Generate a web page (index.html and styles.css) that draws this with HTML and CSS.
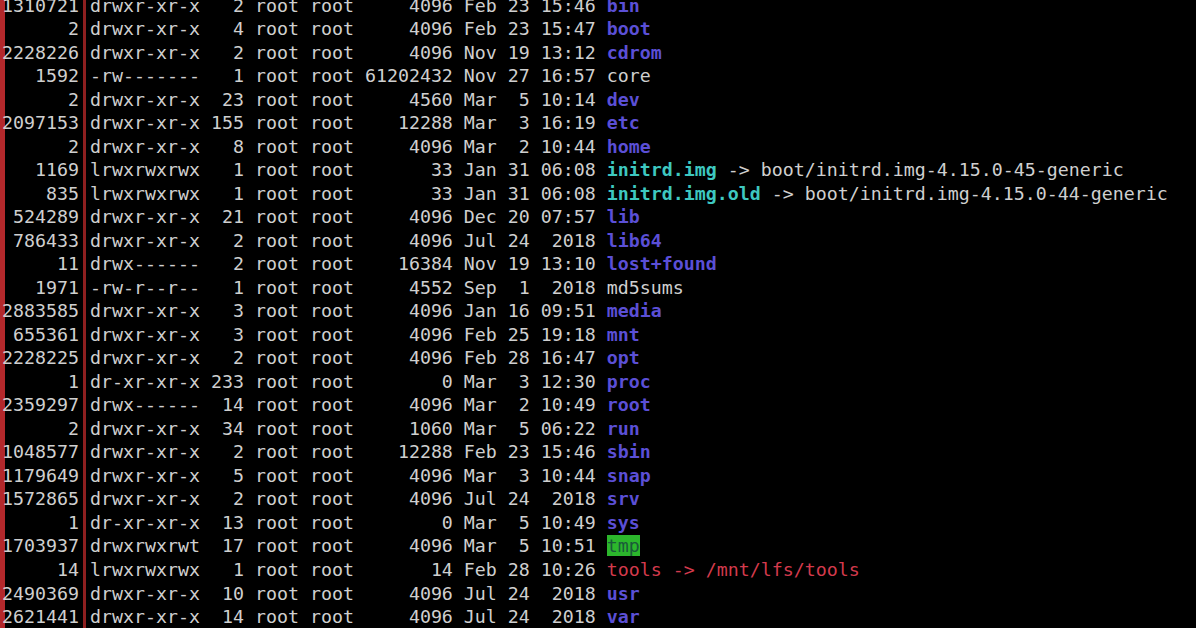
FILE: index.html
```html
<!DOCTYPE html>
<html>
<head>
<meta charset="utf-8">
<link rel="stylesheet" href="styles.css">
</head>
<body>
<main class="term">
<pre class="listing">1310721 drwxr-xr-x   2 root root     4096 Feb 23 15:46 <span class="dir">bin</span>
      2 drwxr-xr-x   4 root root     4096 Feb 23 15:47 <span class="dir">boot</span>
2228226 drwxr-xr-x   2 root root     4096 Nov 19 13:12 <span class="dir">cdrom</span>
   1592 -rw-------   1 root root 61202432 Nov 27 16:57 core
      2 drwxr-xr-x  23 root root     4560 Mar  5 10:14 <span class="dir">dev</span>
2097153 drwxr-xr-x 155 root root    12288 Mar  3 16:19 <span class="dir">etc</span>
      2 drwxr-xr-x   8 root root     4096 Mar  2 10:44 <span class="dir">home</span>
   1169 lrwxrwxrwx   1 root root       33 Jan 31 06:08 <span class="link">initrd.img</span> -&gt; boot/initrd.img-4.15.0-45-generic
    835 lrwxrwxrwx   1 root root       33 Jan 31 06:08 <span class="link">initrd.img.old</span> -&gt; boot/initrd.img-4.15.0-44-generic
 524289 drwxr-xr-x  21 root root     4096 Dec 20 07:57 <span class="dir">lib</span>
 786433 drwxr-xr-x   2 root root     4096 Jul 24  2018 <span class="dir">lib64</span>
     11 drwx------   2 root root    16384 Nov 19 13:10 <span class="dir">lost+found</span>
   1971 -rw-r--r--   1 root root     4552 Sep  1  2018 md5sums
2883585 drwxr-xr-x   3 root root     4096 Jan 16 09:51 <span class="dir">media</span>
 655361 drwxr-xr-x   3 root root     4096 Feb 25 19:18 <span class="dir">mnt</span>
2228225 drwxr-xr-x   2 root root     4096 Feb 28 16:47 <span class="dir">opt</span>
      1 dr-xr-xr-x 233 root root        0 Mar  3 12:30 <span class="dir">proc</span>
2359297 drwx------  14 root root     4096 Mar  2 10:49 <span class="dir">root</span>
      2 drwxr-xr-x  34 root root     1060 Mar  5 06:22 <span class="dir">run</span>
1048577 drwxr-xr-x   2 root root    12288 Feb 23 15:46 <span class="dir">sbin</span>
1179649 drwxr-xr-x   5 root root     4096 Mar  3 10:44 <span class="dir">snap</span>
1572865 drwxr-xr-x   2 root root     4096 Jul 24  2018 <span class="dir">srv</span>
      1 dr-xr-xr-x  13 root root        0 Mar  5 10:49 <span class="dir">sys</span>
1703937 drwxrwxrwt  17 root root     4096 Mar  5 10:51 <span class="sticky">tmp</span>
     14 lrwxrwxrwx   1 root root       14 Feb 28 10:26 <span class="broken">tools -&gt; /mnt/lfs/tools</span>
2490369 drwxr-xr-x  10 root root     4096 Jul 24  2018 <span class="dir">usr</span>
2621441 drwxr-xr-x  14 root root     4096 Jul 24  2018 <span class="dir">var</span></pre>
</main>
</body>
</html>
```

FILE: styles.css
```css
html, body {
  margin: 0;
  padding: 0;
  background: #000;
  height: 100%;
  overflow: hidden;
}

.term {
  height: 100%;
  background: linear-gradient(to right,
    #b3282b 0, #b3282b 5px,
    #000 5px, #000 83px,
    #8e1f1f 83px, #8e1f1f 86px,
    #000 86px);
  overflow: hidden;
}

.listing {
  margin: -6.4px 0 0 2px;
  font-family: "DejaVu Sans Mono", monospace;
  font-size: 18.27px;
  line-height: 23.52px;
  color: #cfcfcf;
  white-space: pre;
}

.dir {
  color: #5b4fd6;
  font-weight: bold;
}

.link {
  color: #3ec8c0;
  font-weight: bold;
}

.broken {
  color: #d33a4c;
}

.sticky {
  background: #2cb62c;
  color: #1a5a3a;
}
```
